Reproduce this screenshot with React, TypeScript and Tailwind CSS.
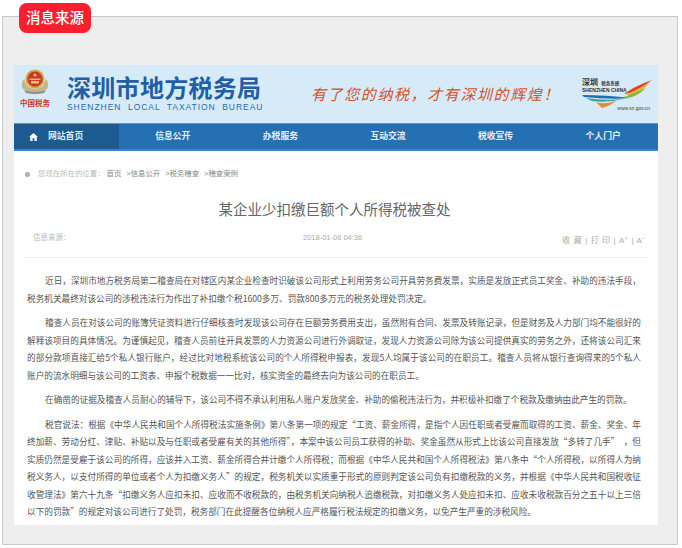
const bodyFont = "font-['Liberation_Sans','Noto_Sans_CJK_SC',sans-serif]";

const navItems = ['信息公开', '办税服务', '互动交流', '税收宣传', '个人门户'];

const paragraphs = [
  '近日，深圳市地方税务局第二稽查局在对辖区内某企业检查时识破该公司形式上利用劳务公司开具劳务费发票，实质是发放正式员工奖金、补助的违法手段，税务机关最终对该公司的涉税违法行为作出了补扣缴个税1600多万、罚款800多万元的税务处理处罚决定。',
  '稽查人员在对该公司的账簿凭证资料进行仔细核查时发现该公司存在巨额劳务费用支出，虽然附有合同、发票及转账记录，但是财务及人力部门均不能很好的解释该项目的具体情况。为谨慎起见，稽查人员前往开具发票的人力资源公司进行外调取证，发现人力资源公司除为该公司提供真实的劳务之外，还将该公司汇来的部分款项直接汇给5个私人银行账户，经过比对地税系统该公司的个人所得税申报表，发现5人均属于该公司的在职员工。稽查人员将从银行查询得来的5个私人账户的流水明细与该公司的工资表、申报个税数据一一比对，核实资金的最终去向为该公司的在职员工。',
  '在确凿的证据及稽查人员耐心的辅导下，该公司不得不承认利用私人账户发放奖金、补助的偷税违法行为，并积极补扣缴了个税款及缴纳由此产生的罚款。',
  '税官说法：根据《中华人民共和国个人所得税法实施条例》第八条第一项的规定“工资、薪金所得，是指个人因任职或者受雇而取得的工资、薪金、奖金、年终加薪、劳动分红、津贴、补贴以及与任职或者受雇有关的其他所得”，本案中该公司员工获得的补助、奖金虽然从形式上比该公司直接发放“多转了几手”\u3000，但实质仍然是受雇于该公司的所得，应该并入工资、薪金所得合并计缴个人所得税；而根据《中华人民共和国个人所得税法》第八条中“个人所得税，以所得人为纳税义务人，以支付所得的单位或者个人为扣缴义务人”的规定，税务机关以实质重于形式的原则判定该公司负有扣缴税款的义务，并根据《中华人民共和国税收征收管理法》第六十九条“扣缴义务人应扣未扣、应收而不收税款的，由税务机关向纳税人追缴税款，对扣缴义务人处应扣未扣、应收未收税款百分之五十以上三倍以下的罚款”的规定对该公司进行了处罚，税务部门在此提醒各位纳税人应严格履行税法规定的扣缴义务，以免产生严重的涉税风险。',
];

function Emblem() {
  return (
    <svg width="30" height="26" viewBox="0 0 30 26">
      <path d="M3 20 Q0 15 4 10 L7 17 Q15 23 23 17 L26 10 Q30 15 27 20 Q15 27 3 20Z" fill="#c3b48a" />
      <path d="M4 21 Q15 25 26 21 L24 24 Q15 26 6 24Z" fill="#8f9088" />
      <circle cx="15" cy="10" r="9.5" fill="#d6a63a" />
      <circle cx="15" cy="10" r="7.5" fill="#c9352c" />
      <rect x="9.5" y="9.5" width="11" height="1.6" fill="#e8c25a" />
      <rect x="11" y="12" width="8" height="2.6" fill="#e8c25a" />
      <circle cx="15" cy="6" r="1.5" fill="#f0d470" />
    </svg>
  );
}

function ShenzhenLogo() {
  return (
    <div className="relative w-[72px] h-[34px] shrink-0">
      <div className="absolute left-[2px] top-[1px] text-[8px] leading-[9px] text-[#333] font-bold whitespace-nowrap">
        深圳 <span className="text-[4.5px] ml-[1px]">税务系统</span>
      </div>
      <div className="absolute left-[2px] top-[10px] text-[5px] leading-[6px] text-[#333] font-bold whitespace-nowrap">
        SHENZHEN CHINA
      </div>
      <div className="absolute right-[2px] bottom-0 text-[5px] leading-[6px] text-[#444] whitespace-nowrap">
        www.sz.gov.cn
      </div>
      <svg className="absolute left-0 top-0" width="72" height="32" viewBox="0 0 72 32">
        <path d="M72 3 Q55 9 44 17 L50 16 Q62 11 72 3Z" fill="#e0402a" />
        <path d="M70 6 Q58 12 46 18 L53 18 Q62 14 70 6Z" fill="#f0b22a" />
        <path d="M66 11 Q55 16 44 20 L52 20 Q60 17 66 11Z" fill="#7dbb3c" />
        <path d="M2 18 Q25 18 52 21 Q30 23 4 20Z" fill="#1f6fb5" />
        <path d="M6 21 Q24 24 44 22 Q28 26 12 24Z" fill="#3aa0a0" />
        <path d="M16 25 Q24 28 36 24 Q30 29 22 31Z" fill="#e88a2c" />
      </svg>
    </div>
  );
}

export default function App() {
  return (
    <div className={`relative w-[682px] h-[548px] bg-white overflow-hidden pt-4 px-[2px] ${bodyFont}`}>
      <div className="absolute left-[19px] top-[3px] z-10 h-[30px] w-[72px] rounded-lg bg-[#fb1f2d] text-white text-[14.5px] leading-[30px] text-center font-medium">
        消息来源
      </div>

      <div className="w-[676px] h-[529px] bg-[#eeeeee] border border-[#c8c8c8] pt-[48px] pl-[11px]">
        <div className="w-[644px] h-[460px] bg-white">
          {/* banner */}
          <div className="h-[58px] bg-[#d6eaf8] flex items-center pl-[5px] pr-[6px]">
            <div className="w-[32px] shrink-0 self-start pt-[4px] flex flex-col items-center gap-[4px]">
              <Emblem />
              <div className="text-[#d3332a] text-[7.5px] leading-[9px] font-bold whitespace-nowrap">中国税务</div>
            </div>
            <div className="ml-[16px] w-[192px] shrink-0">
              <div className="text-[#1f5fa8] text-[24px] leading-[27px] font-bold tracking-[0.3px] whitespace-nowrap">
                深圳市地方税务局
              </div>
              <div className="text-[#2a6aa8] text-[8.5px] leading-[11px] tracking-[0.95px] whitespace-pre">
                SHENZHEN  LOCAL  TAXATION  BUREAU
              </div>
            </div>
            <div className="ml-[52px] flex-1 text-[#d4522d] text-[15px] tracking-[1.6px] italic whitespace-nowrap font-['Noto_Sans_CJK_SC',serif]">
              有了您的纳税，才有深圳的辉煌！
            </div>
            <ShenzhenLogo />
          </div>

          {/* nav */}
          <div className="h-[28px] bg-[#2470b3] border-t border-[#5b9bd0] border-b-2 border-b-[#3a86c8] flex text-white text-[8.8px] font-bold">
            <div className="w-[105px] bg-[#1d5a90] flex items-center pl-[15px]">
              <svg width="9" height="8" viewBox="0 0 10 9" fill="white">
                <path d="M5 0 L10 4.6 L8.7 4.6 L8.7 9 L6 9 L6 6 L4 6 L4 9 L1.3 9 L1.3 4.6 L0 4.6Z" />
              </svg>
              <span className="ml-[10px] text-[#dce9f5]">网站首页</span>
            </div>
            <div className="flex-1 flex">
              {navItems.map((item) => (
                <div key={item} className="w-[107.6px] flex items-center justify-center text-[#e6f0f8]">
                  {item}
                </div>
              ))}
            </div>
          </div>

          {/* breadcrumb */}
          <div className="h-[45px] pl-[11px] flex items-center text-[7.4px] text-[#999] whitespace-nowrap">
            <span className="w-[5px] h-[5px] rounded-full border-2 border-[#aaa] mr-[8px] mt-[1px]" />
            <span className="text-[#bbb]">您现在所在的位置：</span>
            <span className="ml-[2px] text-[#888]">首页</span>
            <span className="ml-[5px] text-[#888]">&gt;信息公开</span>
            <span className="ml-[5px] text-[#888]">&gt;税务稽查</span>
            <span className="ml-[5px] text-[#888]">&gt;稽查案例</span>
          </div>

          {/* title */}
          <h1 className="text-center text-[14.5px] leading-[22px] font-normal text-[#666] mt-[3px] pr-[3px]">
            某企业少扣缴巨额个人所得税被查处
          </h1>

          {/* meta row */}
          <div className="mx-[10px] mt-[12px] h-[25px] border-b border-[#eeeeee] pl-[9px] pr-[2px] flex items-start text-[7.5px] leading-[10px] text-[#bbb]">
            <div className="w-[270px]">信息来源：</div>
            <div className="flex-1 text-[#aaa]">2018-01-08 04:36</div>
            <div className="text-[#aaa] whitespace-pre tracking-[0.6px] text-[8px] mt-[3px]">收 藏 | 打 印 | A⁺ | A⁻</div>
          </div>

          {/* article */}
          <div className="pt-[14px] pl-[13px] w-[628px] flex flex-col gap-[7px]">
            {paragraphs.map((p) => (
              <p key={p.slice(0, 8)} className="w-[614px] text-[8.64px] leading-[17.5px] text-[#555] text-justify indent-[18px] font-['Noto_Sans_CJK_SC',sans-serif]">
                {p}
              </p>
            ))}
          </div>
        </div>
      </div>
    </div>
  );
}
